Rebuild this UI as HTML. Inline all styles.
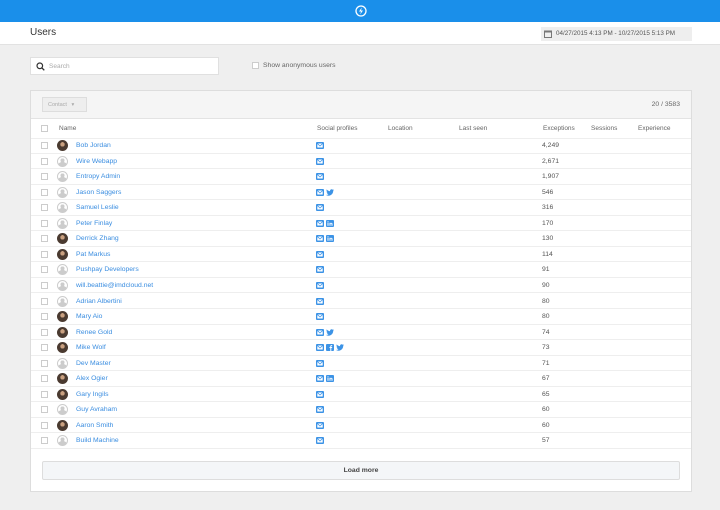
<!DOCTYPE html><html><head><style>
*{box-sizing:border-box;margin:0;padding:0}
body{width:720px;height:510px;background:#efefef;font-family:"Liberation Sans",sans-serif;position:relative;overflow:hidden}
.top{position:absolute;left:0;top:0;width:720px;height:22px;background:#1a8fea}
.hdr{position:absolute;left:0;top:22px;width:720px;height:23px;background:#fff;border-bottom:1px solid #e2e2e2}
.hdr h1{position:absolute;left:30px;top:5px;font-size:10px;font-weight:normal;color:#333}
.date{position:absolute;left:541px;top:27px;width:151px;height:14px;background:#eee;font-size:6.3px;color:#555;line-height:14px;padding-left:15px}
.search{position:absolute;left:30px;top:57px;width:189px;height:18px;background:#fff;border:1px solid #e0e0e0;font-size:6.5px;color:#aaa;line-height:17px;padding-left:18px}
.anon{position:absolute;left:252px;top:61px;font-size:6.8px;color:#666;padding-left:11px;line-height:9px}
.cb{position:absolute;width:7px;height:7px;border:1px solid #ccc;background:#fff}
.panel{position:absolute;left:30px;top:90px;width:662px;height:402px;background:#fff;border:1px solid #ddd}
.tb{position:absolute;left:0;top:0;width:660px;height:28px;background:#f5f5f5;border-bottom:1px solid #e3e3e3}
.contact{position:absolute;left:11px;top:6px;width:45px;height:15px;border:1px solid #ddd;background:#eee;font-size:5.5px;color:#aaa;line-height:14px;padding-left:5px}
.cnt{position:absolute;right:11px;top:10px;font-size:6.8px;color:#666}
.th{position:absolute;top:34px;font-size:6.5px;color:#666}
.row{position:absolute;left:0;width:660px;height:15.55px;border-bottom:1px solid #eee;font-size:6.8px}
.row .cb{left:10px;top:4px}
.av{position:absolute;left:26px;top:2px;width:11px;height:11px;border-radius:50%;overflow:hidden}
.av.d{background:radial-gradient(circle at 50% 38%,#ccc 0 28%,transparent 30%),radial-gradient(circle at 50% 110%,#ccc 0 45%,transparent 47%);border:1px solid #ccc;background-color:#fff}
.av.p{background:radial-gradient(circle at 50% 40%,#c9a080 0 25%,#4a3a30 27%)}
.nm{position:absolute;left:45px;top:4px;color:#3a8de0}
.soc{position:absolute;left:285px;top:4px;height:8px;display:flex;gap:2px}
.soc svg{display:block}
.ex{position:absolute;left:511px;top:4px;color:#555}
.load{position:absolute;left:11px;top:370px;width:638px;height:19px;border:1px solid #ddd;background:#f4f6f8;font-size:6.8px;color:#444;text-align:center;line-height:18px;border-radius:2px}
</style></head><body>
<svg width="0" height="0" style="position:absolute"><defs>
<symbol id="m" viewBox="0 0 8 7"><rect width="8" height="7" rx="1" fill="#3c93e6"/><rect x="1.3" y="1.5" width="5.4" height="4" fill="#fff"/><path d="M1.3 1.5L4 4 6.7 1.5" fill="none" stroke="#3c93e6" stroke-width=".8"/></symbol>
<symbol id="l" viewBox="0 0 8 7"><rect width="8" height="7" rx="1" fill="#3c93e6"/><rect x="1.5" y="2.8" width="1" height="3" fill="#fff"/><rect x="1.5" y="1.3" width="1" height="1" fill="#fff"/><path d="M3.5 5.8V2.8h1v.5c.3-.5 2-.8 2 .7v1.8h-1V4.2c0-.8-1-.7-1 0v1.6z" fill="#fff"/></symbol>
<symbol id="f" viewBox="0 0 8 7"><rect width="8" height="7" rx="1" fill="#3c93e6"/><path d="M4.3 7V4H3.5V3h.8V2.2c0-.8.5-1.1 1.2-1.1H6.2V2h-.5c-.3 0-.4.1-.4.4V3h.9l-.1 1h-.8v3z" fill="#fff"/></symbol>
<symbol id="t" viewBox="0 0 8 7"><path d="M8 1c-.3.1-.6.2-.9.2.3-.2.6-.5.7-.9-.3.2-.6.3-1 .4C6.5.4 6.1.2 5.6.2 4.7.2 4 .9 4 1.8c0 .1 0 .3.1.4C2.7 2.1 1.5 1.4.7.4.6.7.5 1 .5 1.3c0 .6.3 1.1.7 1.4-.3 0-.5-.1-.7-.2 0 .8.6 1.5 1.3 1.6-.3.1-.6.1-.8 0 .2.7.8 1.1 1.5 1.1C1.9 5.7 1 6 0 5.9.7 6.4 1.6 6.7 2.5 6.7c3 0 4.7-2.5 4.7-4.7v-.2C7.5 1.6 7.8 1.3 8 1z" fill="#3c93e6"/></symbol>
</defs></svg>
<div class="top"><svg style="position:absolute;left:355px;top:5px" width="12" height="12" viewBox="0 0 12 12"><circle cx="6" cy="6" r="5" fill="none" stroke="#fff" stroke-width="1.3"/><path d="M6.8 2.5L4 6.5h2L5.2 9.5 8 5.5H6z" fill="#fff"/></svg></div>
<div class="hdr"><h1>Users</h1></div>
<div class="date"><svg style="position:absolute;left:3px;top:3px" width="8" height="8" viewBox="0 0 8 8"><rect x=".5" y="1" width="7" height="6.5" fill="none" stroke="#777"/><rect x="1" y="1" width="6" height="1.5" fill="#777"/></svg>04/27/2015 4:13 PM - 10/27/2015 5:13 PM</div>
<div class="search"><svg style="position:absolute;left:5px;top:4px" width="9" height="9" viewBox="0 0 9 9"><circle cx="3.8" cy="3.8" r="2.8" fill="none" stroke="#333" stroke-width="1.2"/><path d="M6 6l2.3 2.3" stroke="#333" stroke-width="1.3"/></svg>Search</div>
<div class="anon"><span class="cb" style="left:0;top:1px"></span>Show anonymous users</div>
<div class="panel">
<div class="tb"><div class="contact">Contact &nbsp;&nbsp;▾</div><div class="cnt">20 / 3583</div></div>
<span class="cb" style="left:10px;top:34px"></span>
<div class="th" style="left:28px">Name</div><div class="th" style="left:286px">Social profiles</div><div class="th" style="left:357px">Location</div><div class="th" style="left:428px">Last seen</div><div class="th" style="left:512px">Exceptions</div><div class="th" style="left:560px">Sessions</div><div class="th" style="left:607px">Experience</div>
<div style="position:absolute;left:0;top:47px;width:660px;border-top:1px solid #eee"></div>
<div class="load"><b style="font-weight:600">Load more</b></div>
<div class="row" style="top:47px"><span class="cb"></span><span class="av p"></span><span class="nm">Bob Jordan</span><span class="soc"><svg width="8" height="7"><use href="#m"/></svg></span><span class="ex">4,249</span></div>
<div class="row" style="top:62.55px"><span class="cb"></span><span class="av d"></span><span class="nm">Wire Webapp</span><span class="soc"><svg width="8" height="7"><use href="#m"/></svg></span><span class="ex">2,671</span></div>
<div class="row" style="top:78.1px"><span class="cb"></span><span class="av d"></span><span class="nm">Entropy Admin</span><span class="soc"><svg width="8" height="7"><use href="#m"/></svg></span><span class="ex">1,907</span></div>
<div class="row" style="top:93.65px"><span class="cb"></span><span class="av d"></span><span class="nm">Jason Saggers</span><span class="soc"><svg width="8" height="7"><use href="#m"/></svg><svg width="8" height="7"><use href="#t"/></svg></span><span class="ex">546</span></div>
<div class="row" style="top:109.2px"><span class="cb"></span><span class="av d"></span><span class="nm">Samuel Leslie</span><span class="soc"><svg width="8" height="7"><use href="#m"/></svg></span><span class="ex">316</span></div>
<div class="row" style="top:124.75px"><span class="cb"></span><span class="av d"></span><span class="nm">Peter Finlay</span><span class="soc"><svg width="8" height="7"><use href="#m"/></svg><svg width="8" height="7"><use href="#l"/></svg></span><span class="ex">170</span></div>
<div class="row" style="top:140.3px"><span class="cb"></span><span class="av p"></span><span class="nm">Derrick Zhang</span><span class="soc"><svg width="8" height="7"><use href="#m"/></svg><svg width="8" height="7"><use href="#l"/></svg></span><span class="ex">130</span></div>
<div class="row" style="top:155.85px"><span class="cb"></span><span class="av p"></span><span class="nm">Pat Markus</span><span class="soc"><svg width="8" height="7"><use href="#m"/></svg></span><span class="ex">114</span></div>
<div class="row" style="top:171.4px"><span class="cb"></span><span class="av d"></span><span class="nm">Pushpay Developers</span><span class="soc"><svg width="8" height="7"><use href="#m"/></svg></span><span class="ex">91</span></div>
<div class="row" style="top:186.95px"><span class="cb"></span><span class="av d"></span><span class="nm">will.beattie@imdcloud.net</span><span class="soc"><svg width="8" height="7"><use href="#m"/></svg></span><span class="ex">90</span></div>
<div class="row" style="top:202.5px"><span class="cb"></span><span class="av d"></span><span class="nm">Adrian Albertini</span><span class="soc"><svg width="8" height="7"><use href="#m"/></svg></span><span class="ex">80</span></div>
<div class="row" style="top:218.05px"><span class="cb"></span><span class="av p"></span><span class="nm">Mary Aio</span><span class="soc"><svg width="8" height="7"><use href="#m"/></svg></span><span class="ex">80</span></div>
<div class="row" style="top:233.6px"><span class="cb"></span><span class="av p"></span><span class="nm">Renee Gold</span><span class="soc"><svg width="8" height="7"><use href="#m"/></svg><svg width="8" height="7"><use href="#t"/></svg></span><span class="ex">74</span></div>
<div class="row" style="top:249.15px"><span class="cb"></span><span class="av p"></span><span class="nm">Mike Wolf</span><span class="soc"><svg width="8" height="7"><use href="#m"/></svg><svg width="8" height="7"><use href="#f"/></svg><svg width="8" height="7"><use href="#t"/></svg></span><span class="ex">73</span></div>
<div class="row" style="top:264.7px"><span class="cb"></span><span class="av d"></span><span class="nm">Dev Master</span><span class="soc"><svg width="8" height="7"><use href="#m"/></svg></span><span class="ex">71</span></div>
<div class="row" style="top:280.25px"><span class="cb"></span><span class="av p"></span><span class="nm">Alex Ogier</span><span class="soc"><svg width="8" height="7"><use href="#m"/></svg><svg width="8" height="7"><use href="#l"/></svg></span><span class="ex">67</span></div>
<div class="row" style="top:295.8px"><span class="cb"></span><span class="av p"></span><span class="nm">Gary Ingils</span><span class="soc"><svg width="8" height="7"><use href="#m"/></svg></span><span class="ex">65</span></div>
<div class="row" style="top:311.35px"><span class="cb"></span><span class="av d"></span><span class="nm">Guy Avraham</span><span class="soc"><svg width="8" height="7"><use href="#m"/></svg></span><span class="ex">60</span></div>
<div class="row" style="top:326.9px"><span class="cb"></span><span class="av p"></span><span class="nm">Aaron Smith</span><span class="soc"><svg width="8" height="7"><use href="#m"/></svg></span><span class="ex">60</span></div>
<div class="row" style="top:342.45px"><span class="cb"></span><span class="av d"></span><span class="nm">Build Machine</span><span class="soc"><svg width="8" height="7"><use href="#m"/></svg></span><span class="ex">57</span></div>
</div>
</body></html>
